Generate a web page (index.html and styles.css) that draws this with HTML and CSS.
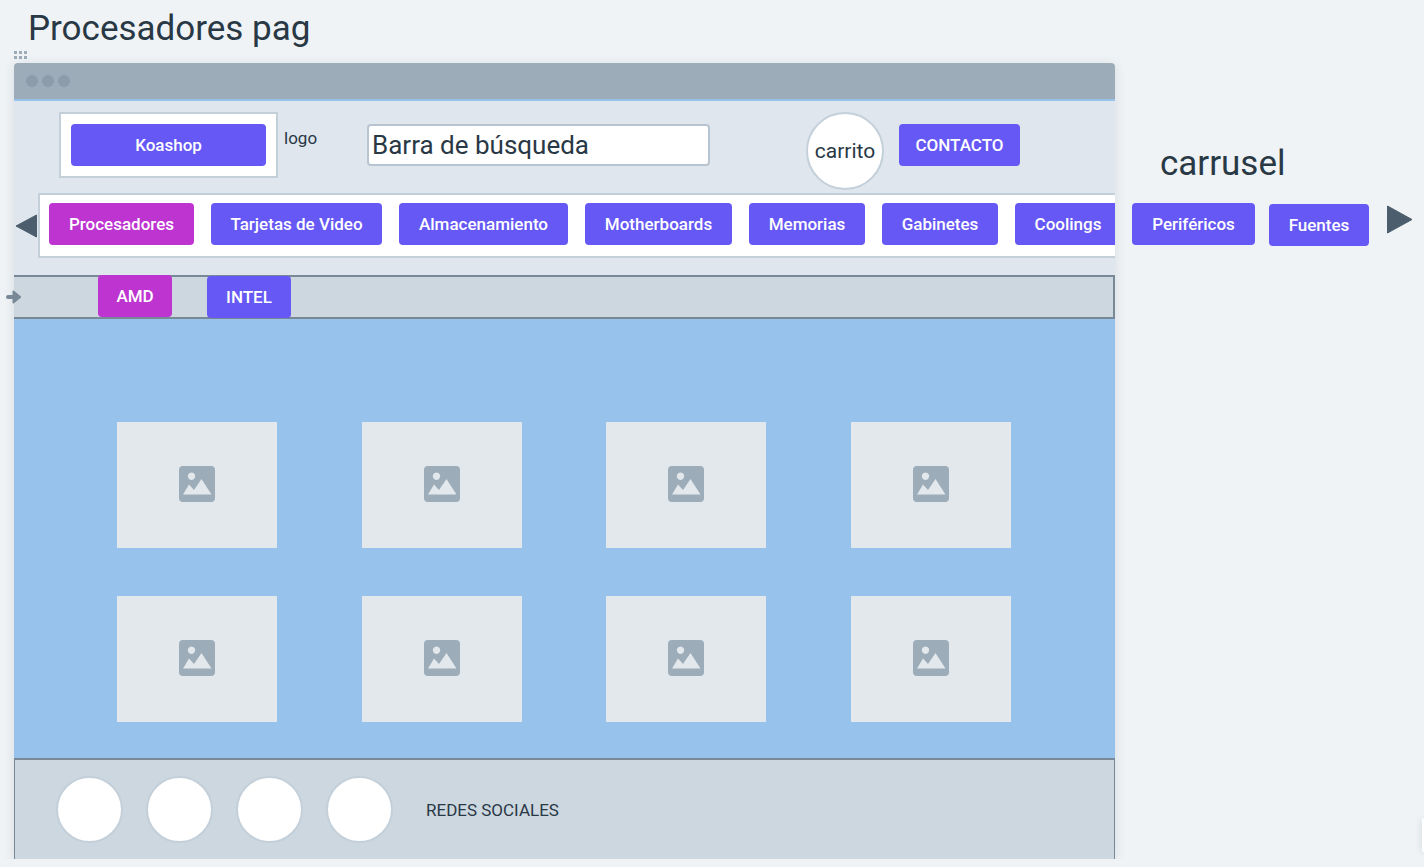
FILE: index.html
```
<!DOCTYPE html>
<html lang="es">
<head>
<meta charset="utf-8">
<meta name="viewport" content="width=device-width, initial-scale=1">
<title>Procesadores pag</title>
<link rel="stylesheet" href="styles.css">
</head>
<body>
<svg class="defs" aria-hidden="true">
  <symbol id="picture" viewBox="0 0 36 36">
    <path fill="#9dacb9" fill-rule="evenodd" d="M4 0h28a4 4 0 0 1 4 4v28a4 4 0 0 1-4 4H4a4 4 0 0 1-4-4V4a4 4 0 0 1 4-4zM12.500 6.500a3.700 3.700 0 1 0 0.010 0zM4 28.500h28.500L22.500 13l-7.500 11-5-5.500z"/>
  </symbol>
</svg>
<h1 class="title">Procesadores pag</h1>
<svg class="handle" width="13" height="8" viewBox="0 0 13 8" fill="#9dacb9" aria-hidden="true">
  <path d="M0 0h3v3H0zM5 0h3v3H5zM10 0h3v3h-3zM0 5h3v3H0zM5 5h3v3H5zM10 5h3v3h-3z"/>
</svg>
<div class="board">
  <main class="window">
    <div class="titlebar"><span class="dot"></span><span class="dot"></span><span class="dot"></span></div>
    <header class="header">
      <div class="toolbar">
        <div class="brand">
          <div class="brand-box"><button class="btn btn-brand">Koashop</button></div>
          <span class="brand-note">logo</span>
        </div>
        <input class="search" type="text" value="Barra de búsqueda" aria-label="Barra de búsqueda">
        <button class="cart">carrito</button>
        <button class="btn btn-contact">CONTACTO</button>
      </div>
      <div class="carousel">
        <button class="arrow" aria-label="Anterior">
          <svg width="23" height="26" viewBox="0 0 23 26"><path fill="#4c5e6d" stroke="#4c5e6d" stroke-linejoin="round" d="M2 13 22.500 2v22z"/></svg>
        </button>
        <nav class="categories">
          <button class="btn btn-active">Procesadores</button>
          <button class="btn">Tarjetas de Video</button>
          <button class="btn">Almacenamiento</button>
          <button class="btn">Motherboards</button>
          <button class="btn">Memorias</button>
          <button class="btn">Gabinetes</button>
          <button class="btn">Coolings</button>
        </nav>
      </div>
    </header>
    <nav class="brands">
      <svg class="marker" width="16" height="14" viewBox="0 0 16 14" aria-hidden="true"><path fill="#788896" d="M2 5h4.500V1.500Q6.500 0 8 .8L15 6.500v1L8 13.200Q6.500 14 6.500 12.500V9H2a2 2 0 0 1 0-4z"/></svg>
      <button class="btn btn-active btn-amd">AMD</button>
      <button class="btn btn-intel">INTEL</button>
    </nav>
    <section class="products">
      <div class="card"><svg class="picture"><use href="#picture"/></svg></div>
      <div class="card"><svg class="picture"><use href="#picture"/></svg></div>
      <div class="card"><svg class="picture"><use href="#picture"/></svg></div>
      <div class="card"><svg class="picture"><use href="#picture"/></svg></div>
      <div class="card"><svg class="picture"><use href="#picture"/></svg></div>
      <div class="card"><svg class="picture"><use href="#picture"/></svg></div>
      <div class="card"><svg class="picture"><use href="#picture"/></svg></div>
      <div class="card"><svg class="picture"><use href="#picture"/></svg></div>
    </section>
    <footer class="footer">
      <div class="socials">
        <span class="social"></span><span class="social"></span><span class="social"></span><span class="social"></span>
      </div>
      <span>REDES SOCIALES</span>
    </footer>
  </main>
  <aside class="side">
    <h2 class="side-title">carrusel</h2>
    <div class="side-row">
      <button class="btn btn-perifericos">Periféricos</button>
      <button class="btn btn-fuentes">Fuentes</button>
      <button class="arrow arrow-next" aria-label="Siguiente">
        <svg width="27" height="31" viewBox="0 0 27 31"><path fill="#4c5e6d" stroke="#4c5e6d" stroke-linejoin="round" d="M1.500 2v27L26 15.500z"/></svg>
      </button>
    </div>
  </aside>
</div>
<div class="edge-panel"></div>
</body>
</html>
```
FILE: styles.css
```
* {
  box-sizing: border-box;
}

body {
  margin: 0;
  background: #eff3f6;
  color: #293845;
  font-family: Roboto, "Liberation Sans", sans-serif;
  font-size: 17px;
}

button,
input {
  margin: 0;
  padding: 0;
  border: 0;
  font: inherit;
  color: inherit;
}

.defs {
  position: absolute;
  width: 0;
  height: 0;
}

.title,
.side-title {
  margin: 0;
  font-size: 35px;
  font-weight: 400;
  line-height: 42px;
}

.title {
  padding: 8px 0 1px 28px;
}

.handle {
  display: block;
  margin: 0 0 4px 14px;
}

.board {
  display: flex;
  padding-left: 14px;
}

.window {
  flex: 1;
  min-width: 0;
  border-radius: 4px 4px 0 0;
  box-shadow: 0 2px 12px rgba(41, 56, 69, 0.12);
}

.titlebar {
  display: flex;
  align-items: center;
  gap: 4px;
  height: 38px;
  padding-left: 12px;
  border-bottom: 2px solid #96c2eb;
  border-radius: 4px 4px 0 0;
  background: #9dacb9;
}

.dot {
  width: 12px;
  height: 12px;
  border-radius: 50%;
  background: #8c9cab;
}

.header {
  padding-bottom: 17px;
  background: #dfe6ed;
}

.toolbar {
  display: flex;
  align-items: flex-start;
  padding: 11px 95px 3px 45px;
}

.brand {
  display: flex;
  gap: 6px;
  width: 308px;
}

.brand-box {
  width: 219px;
  padding: 10px;
  border: 2px solid #c3cfd9;
  background: #fff;
}

.brand-note {
  padding-top: 14px;
  line-height: 24px;
}

.btn {
  height: 42px;
  border-radius: 4px;
  background: #6558f5;
  color: #fff;
  font-weight: 500;
  white-space: nowrap;
}

.btn-active {
  background: #bd34d1;
}

.btn-brand {
  width: 100%;
}

.search {
  flex: 1;
  min-width: 0;
  height: 42px;
  margin-top: 12px;
  padding: 0 3px;
  border: 2px solid #b8c4d0;
  border-radius: 4px;
  background: #fff;
  font-size: 26px;
}

.cart {
  width: 78px;
  height: 78px;
  margin-left: 96px;
  border: 2px solid #c3cfd9;
  border-radius: 50%;
  background: #fff;
  font-size: 21px;
}

.btn-contact {
  width: 121px;
  margin: 12px 0 0 15px;
}

.carousel {
  display: flex;
  align-items: center;
}

.arrow {
  display: flex;
  width: 24px;
  background: none;
}

.categories {
  display: grid;
  grid-template-columns: 145px 171px 169px 147px 116px 116px 106px;
  gap: 17px;
  flex: 1;
  min-width: 0;
  height: 65px;
  padding: 8px 0 0 9px;
  overflow: hidden;
  border: 2px solid #c3cfd9;
  border-right: 0;
  background: #fff;
}

.brands {
  position: relative;
  display: flex;
  align-items: flex-start;
  gap: 35px;
  height: 44px;
  padding-left: 84px;
  background: #cdd7e0;
  box-shadow: inset 0 2px #788896, inset 0 -2px #788896, inset -2px 0 #788896;
}

.marker {
  position: absolute;
  top: 15px;
  left: -8px;
}

.btn-amd {
  width: 74px;
}

.btn-intel {
  align-self: center;
  width: 84px;
}

.products {
  display: grid;
  grid-template-columns: repeat(4, 160px);
  justify-content: space-between;
  row-gap: 48px;
  padding: 103px 104px 36px 103px;
  background: #96c2eb;
}

.card {
  display: flex;
  align-items: center;
  justify-content: center;
  height: 126px;
  padding-bottom: 2px;
  background: #e2e8ec;
}

.picture {
  width: 36px;
  height: 36px;
}

.footer {
  display: flex;
  align-items: center;
  gap: 33px;
  height: 101px;
  padding-left: 41px;
  border: solid #788896;
  border-width: 2px 1px 0;
  background: #cdd7e0;
}

.socials {
  display: flex;
  gap: 23px;
}

.social {
  width: 67px;
  height: 67px;
  border: 2px solid #c3cfd9;
  border-radius: 50%;
  background: #fff;
}

.side {
  width: 309px;
  padding-top: 80px;
}

.side-title {
  padding-left: 45px;
}

.side-row {
  display: flex;
  height: 43px;
  margin-top: 18px;
  padding-left: 17px;
}

.btn-perifericos {
  width: 123px;
}

.btn-fuentes {
  align-self: flex-end;
  width: 100px;
  margin-left: 14px;
}

.arrow-next {
  width: 27px;
  height: 33px;
  margin-left: 17px;
  align-items: center;
}

.edge-panel {
  position: fixed;
  right: 0;
  bottom: 15px;
  width: 2px;
  height: 34px;
  border-radius: 4px 0 0 4px;
  background: #fff;
  box-shadow: 0 1px 6px rgba(41, 56, 69, 0.25);
}
```
